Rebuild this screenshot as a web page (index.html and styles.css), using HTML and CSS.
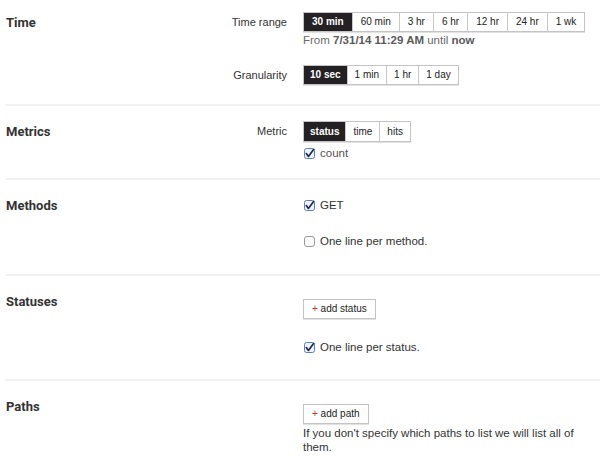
FILE: index.html
```html
<!DOCTYPE html>
<html>
<head>
<meta charset="utf-8">
<link rel="stylesheet" href="styles.css">
</head>
<body>
<div class="page">
  <section class="sec sec-first">
    <h2 class="sec-title">Time</h2>
    <div class="sec-body">
      <div class="field">
        <div class="field-label">Time range</div>
        <div class="field-ctrl">
          <div class="btn-group">
            <span class="seg active">30 min</span><span class="seg">60 min</span><span class="seg">3 hr</span><span class="seg">6 hr</span><span class="seg">12 hr</span><span class="seg">24 hr</span><span class="seg">1 wk</span>
          </div>
          <div class="hint">From <b>7/31/14 11:29 AM</b> until <b>now</b></div>
        </div>
      </div>
      <div class="field field-gran">
        <div class="field-label">Granularity</div>
        <div class="field-ctrl">
          <div class="btn-group btn-group-tight">
            <span class="seg active">10 sec</span><span class="seg">1 min</span><span class="seg">1 hr</span><span class="seg">1 day</span>
          </div>
        </div>
      </div>
    </div>
  </section>

  <section class="sec sec-metrics">
    <h2 class="sec-title">Metrics</h2>
    <div class="sec-body">
      <div class="field">
        <div class="field-label">Metric</div>
        <div class="field-ctrl">
          <div class="btn-group btn-group-alt">
            <span class="seg active">status</span><span class="seg">time</span><span class="seg">hits</span>
          </div>
          <label class="check check-count"><span class="box checked"><svg viewBox="0 0 11 11" width="11" height="11"><rect x="0.5" y="0.5" width="10" height="10" rx="2" class="box-frame"/><path d="M2.3 5.6 L4.4 8.4 L9.6 1.6" class="box-tick"/></svg></span>count</label>
        </div>
      </div>
    </div>
  </section>

  <section class="sec sec-methods">
    <h2 class="sec-title">Methods</h2>
    <div class="sec-body">
      <div class="field">
        <div class="field-label"></div>
        <div class="field-ctrl">
          <label class="check"><span class="box checked"><svg viewBox="0 0 11 11" width="11" height="11"><rect x="0.5" y="0.5" width="10" height="10" rx="2" class="box-frame"/><path d="M2.3 5.6 L4.4 8.4 L9.6 1.6" class="box-tick"/></svg></span>GET</label>
          <label class="check check-spaced"><span class="box"><svg viewBox="0 0 11 11" width="11" height="11"><rect x="0.5" y="0.5" width="10" height="10" rx="2.5" class="box-frame-off"/></svg></span>One line per method.</label>
        </div>
      </div>
    </div>
  </section>

  <section class="sec sec-statuses">
    <h2 class="sec-title">Statuses</h2>
    <div class="sec-body">
      <div class="field">
        <div class="field-label"></div>
        <div class="field-ctrl">
          <span class="add-btn"><span class="plus">+</span> add status</span>
          <label class="check check-spaced2"><span class="box checked"><svg viewBox="0 0 11 11" width="11" height="11"><rect x="0.5" y="0.5" width="10" height="10" rx="2" class="box-frame"/><path d="M2.3 5.6 L4.4 8.4 L9.6 1.6" class="box-tick"/></svg></span>One line per status.</label>
        </div>
      </div>
    </div>
  </section>

  <section class="sec sec-paths">
    <h2 class="sec-title">Paths</h2>
    <div class="sec-body">
      <div class="field">
        <div class="field-label"></div>
        <div class="field-ctrl">
          <span class="add-btn"><span class="plus">+</span> add path</span>
          <p class="note">If you don't specify which paths to list we will list all of them.</p>
        </div>
      </div>
    </div>
  </section>
</div>
</body>
</html>
```

FILE: styles.css
```css
* { box-sizing: border-box; }

html, body {
  margin: 0;
  padding: 0;
  background: #fff;
}

body {
  font-family: "Liberation Sans", Arial, sans-serif;
  font-size: 11.5px;
  color: #333;
}

.page {
  padding-left: 5px;
}

.sec {
  display: grid;
  grid-template-columns: 120px 1fr;
  padding: 15px 14px 0 1px;
  border-top: 2px solid #f2f2f2;
}

.sec-first {
  border-top: 0;
  padding-top: 12px;
  padding-bottom: 19px;
}

.sec-metrics { padding-bottom: 16px; }
.sec-methods { padding-bottom: 23px; }
.sec-statuses { padding-bottom: 22px; }
.sec-paths { padding-bottom: 4px; }

.sec-title {
  margin: 0;
  padding-top: 1px;
  font-family: Roboto, "Liberation Sans", sans-serif;
  font-weight: 700;
  font-size: 13px;
  line-height: 20px;
  color: #333;
}

.field {
  display: grid;
  grid-template-columns: 161px 1fr;
  column-gap: 16px;
}

.field-gran { margin-top: 18px; }

.field-label {
  text-align: right;
  font-size: 11px;
  line-height: 20px;
  color: #333;
}

.field-ctrl {
  display: flex;
  flex-direction: column;
  align-items: flex-start;
}

.btn-group {
  display: flex;
  border: 1px solid #c4c4c4;
  box-shadow: 0 1px 0 #e2e2e2;
}

.seg {
  display: block;
  padding: 0 8px;
  height: 18px;
  line-height: 18px;
  font-size: 10px;
  color: #222;
  background: #fff;
  border-left: 1px solid #c9c9c9;
}

.seg:first-child { border-left: 0; }

.seg.active {
  background: #232123;
  color: #fff;
  font-weight: 700;
}

.btn-group-tight .seg {
  padding: 0 7px;
}

.btn-group-tight .seg.active {
  padding: 0 6px;
}

.btn-group-alt .seg {
  height: 19px;
  line-height: 19px;
  padding: 0 7px;
}

.btn-group-alt .seg.active {
  padding: 0 6px;
}

.hint {
  margin-top: 1px;
  line-height: 14px;
  font-size: 11.5px;
  color: #6a6a6a;
}

.hint b { color: #5a5a5a; }

.check {
  display: flex;
  align-items: center;
  height: 20px;
  font-size: 11.5px;
  color: #333;
}

.check-count {
  margin-top: 2px;
  height: 18px;
  color: #555;
}

.check-spaced { margin-top: 16px; }
.check-spaced2 { margin-top: 18px; }

.box {
  display: inline-flex;
  width: 11px;
  height: 11px;
  margin: 0 5px 0 1px;
}

.box svg { display: block; }

.box-frame {
  fill: #eef3fc;
  stroke: #5b7ec4;
  stroke-width: 1;
}

.box-frame-off {
  fill: #fafafa;
  stroke: #9a9a9a;
  stroke-width: 1;
}

.box-tick {
  fill: none;
  stroke: #1d2a4d;
  stroke-width: 1.7;
  stroke-linecap: round;
  stroke-linejoin: round;
}

.add-btn {
  display: inline-block;
  margin-top: 8px;
  height: 20px;
  line-height: 18px;
  padding: 0 8px;
  font-size: 10px;
  color: #222;
  border: 1px solid #c4c4c4;
  box-shadow: 0 1px 0 #e2e2e2;
  background: #fff;
}

.plus {
  color: #c0392b;
}

.note {
  margin: 2px 0 0;
  line-height: 14px;
  font-size: 11.5px;
  color: #333;
}
```
